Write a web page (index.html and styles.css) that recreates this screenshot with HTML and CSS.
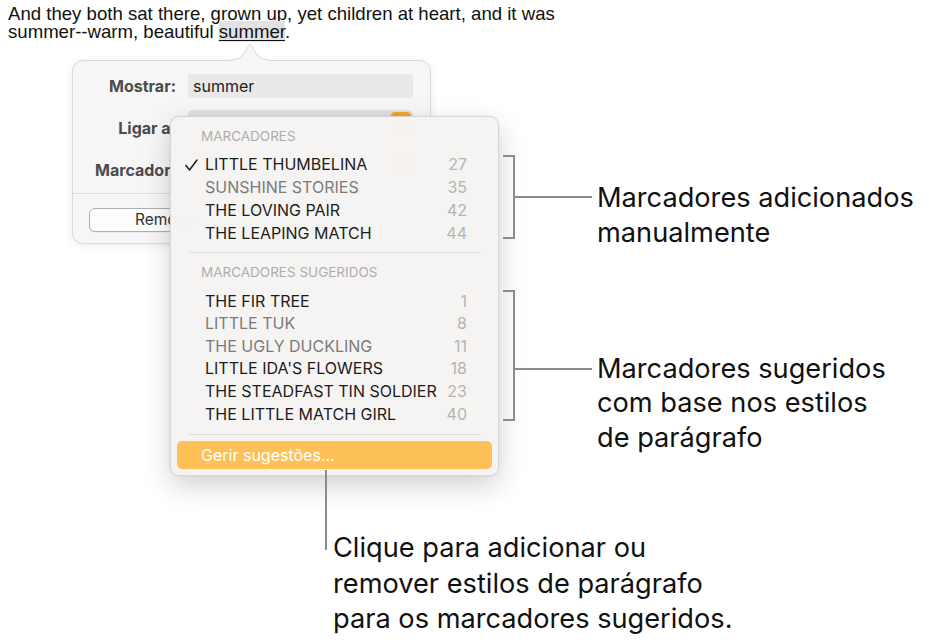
FILE: index.html
```html
<!DOCTYPE html>
<html lang="pt">
<head>
<meta charset="utf-8">
<title>Marcadores</title>
<link rel="stylesheet" href="styles.css">
</head>
<body>
<div class="canvas">
  <p class="doc">And they both sat there, grown up, yet children at heart, and it was<br>summer--warm, beautiful <span class="sel">summer</span>.</p>

  <div class="popover">
    <svg class="arrow" width="38" height="19" viewBox="0 0 38 19"><path d="M0 17 L0 19 L38 19 L38 17 C29 17 26 12 23 7 C21 3 20 1.5 19 1.5 C18 1.5 17 3 15 7 C12 12 9 17 0 17 Z" fill="#f6f6f6"/><path d="M0 17 C9 17 12 12 15 7 C17 3 18 1.5 19 1.5 C20 1.5 21 3 23 7 C26 12 29 17 38 17" fill="none" stroke="#d6d6d6" stroke-width="1"/></svg>
    <div class="form">
      <div class="label">Mostrar:</div>
      <div class="field text">summer</div>
      <div class="label low">Ligar a:</div>
      <div class="field popup"><span class="stepper"></span></div>
      <div class="label low">Marcador:</div>
      <div class="field popup"><span class="stepper"></span></div>
    </div>
    <div class="pop-sep"></div>
    <div class="buttons">
      <div class="btn">Remover</div>
      <div class="btn"></div>
    </div>
  </div>

  <div class="menu">
    <div class="menu-head">MARCADORES</div>
    <div class="group">
      <div class="item dark"><svg class="check" width="13" height="12" viewBox="0 0 13 12"><path d="M1 6.5 L4.5 11 L12 1" fill="none" stroke="#1d1d1d" stroke-width="1.5" stroke-linecap="round" stroke-linejoin="round"/></svg><span class="name">LITTLE THUMBELINA</span><span class="num">27</span></div>
      <div class="item gray"><span class="name">SUNSHINE STORIES</span><span class="num">35</span></div>
      <div class="item dark"><span class="name">THE LOVING PAIR</span><span class="num">42</span></div>
      <div class="item dark"><span class="name">THE LEAPING MATCH</span><span class="num">44</span></div>
    </div>
    <div class="menu-sep first"></div>
    <div class="menu-head second">MARCADORES SUGERIDOS</div>
    <div class="group sugg">
      <div class="item dark"><span class="name">THE FIR TREE</span><span class="num">1</span></div>
      <div class="item gray"><span class="name">LITTLE TUK</span><span class="num">8</span></div>
      <div class="item gray"><span class="name">THE UGLY DUCKLING</span><span class="num">11</span></div>
      <div class="item dark"><span class="name">LITTLE IDA'S FLOWERS</span><span class="num">18</span></div>
      <div class="item dark"><span class="name">THE STEADFAST TIN SOLDIER</span><span class="num">23</span></div>
      <div class="item dark"><span class="name">THE LITTLE MATCH GIRL</span><span class="num">40</span></div>
    </div>
    <div class="menu-sep last"></div>
    <div class="manage">Gerir sugestões...</div>
  </div>

  <div class="bracket b1"></div>
  <div class="hline h1"></div>
  <div class="callout c1">Marcadores adicionados<br>manualmente</div>

  <div class="bracket b2"></div>
  <div class="hline h2"></div>
  <div class="callout c2">Marcadores sugeridos<br>com base nos estilos<br>de parágrafo</div>

  <div class="vline"></div>
  <div class="callout c3">Clique para adicionar ou<br>remover estilos de parágrafo<br>para os marcadores sugeridos.</div>
</div>
</body>
</html>
```
FILE: styles.css
```css
html, body {
  margin: 0;
  padding: 0;
  background: #ffffff;
}
.canvas {
  position: relative;
  width: 929px;
  height: 643px;
  overflow: hidden;
  background: #ffffff;
}
.doc {
  margin: 0;
  padding: 5px 8px 0;
  font-family: "Liberation Sans", Arial, sans-serif;
  font-size: 18.6px;
  line-height: 18px;
  color: #111111;
  white-space: nowrap;
}
.sel {
  background: #e2e2e2;
  text-decoration: underline;
  text-underline-offset: 2px;
  text-decoration-thickness: 1px;
}

/* popover */
.popover {
  position: absolute;
  left: 72px;
  top: 60px;
  width: 357px;
  height: 182px;
  background: #f6f6f6;
  border: 1px solid #d9d9d9;
  border-radius: 11px;
  box-shadow: 0 2px 8px rgba(0,0,0,0.08);
  font-family: Inter, "Noto Sans", sans-serif;
}
.arrow {
  position: absolute;
  left: 158px;
  top: -18px;
  display: block;
}
.form {
  display: grid;
  grid-template-columns: 103px 225px;
  column-gap: 12px;
  row-gap: 12px;
  padding: 13px 0 0 0;
  align-items: start;
}
.label {
  text-align: right;
  font-weight: 700;
  font-size: 16px;
  color: #4b4b4b;
  line-height: 24px;
}
.label.low {
  padding-top: 6px;
}
.field {
  position: relative;
  height: 24px;
  background: #e9e9e9;
  font-size: 16px;
  line-height: 24px;
  color: #222222;
  padding-left: 5px;
  box-sizing: border-box;
}
.field.popup {
  height: 26px;
  background: #e0e0e0;
  border-radius: 5px;
}
.stepper {
  position: absolute;
  right: 2px;
  top: 2px;
  width: 20px;
  height: 22px;
  border-radius: 4px;
  background: #f5a623;
}
.pop-sep {
  margin-top: 11px;
  height: 1px;
  background: #dcdcdc;
}
.buttons {
  display: flex;
  gap: 12px;
  padding: 14px 16px 0;
}
.btn {
  width: 155px;
  height: 22px;
  border: 1px solid #aeaeae;
  border-radius: 6px;
  background: #fdfdfd;
  box-shadow: 0 1px 1px rgba(0,0,0,0.05);
  text-align: center;
  font-size: 15.5px;
  line-height: 22px;
  color: #333333;
}

/* menu */
.menu {
  position: absolute;
  left: 170px;
  top: 116px;
  width: 327px;
  height: 358px;
  padding: 0;
  background: rgba(246, 244, 242, 0.98);
  border: 1px solid #d6d6d6;
  border-radius: 9px;
  box-shadow: 0 10px 28px rgba(0,0,0,0.18), 0 0 2px rgba(0,0,0,0.1);
  font-family: Inter, "Noto Sans", sans-serif;
}
.menu-head {
  padding-left: 30px;
  margin-top: 8px;
  font-size: 13.5px;
  line-height: 22px;
  color: #adadad;
}
.menu-head.second {
  margin-top: 8px;
}
.group {
  margin-top: 5.5px;
}
.group.sugg {
  margin-top: 6.7px;
}
.item {
  position: relative;
  display: flex;
  justify-content: space-between;
  padding: 0 31px 0 34px;
  height: 23px;
  line-height: 23px;
  font-size: 16px;
}
.sugg .item {
  height: 22.6px;
  line-height: 22.6px;
}
.item.dark .name { color: #1c1c1c; }
.item.gray .name { color: #7b7b7b; }
.num { color: #b4b4b4; }
.check {
  position: absolute;
  left: 14px;
  top: 6px;
}
.menu-sep {
  margin: 7.5px 17px 0 18px;
  height: 1px;
  background: #dedcda;
}
.menu-sep.last {
  margin-top: 8.7px;
}
.manage {
  margin: 6px 6px 0;
  height: 28px;
  line-height: 28px;
  padding-left: 24px;
  border-radius: 5px;
  background: #fec158;
  color: #ffffff;
  font-size: 16px;
}

/* callouts */
.bracket {
  position: absolute;
  left: 503px;
  width: 10px;
  border: 2px solid #8c8c8c;
  border-left: none;
}
.b1 { top: 155px; height: 80px; }
.b2 { top: 290px; height: 127px; }
.hline {
  position: absolute;
  left: 515px;
  width: 77px;
  height: 2px;
  background: #8c8c8c;
}
.h1 { top: 196px; }
.h2 { top: 368px; }
.vline {
  position: absolute;
  left: 325px;
  top: 470px;
  width: 2px;
  height: 80px;
  background: #8c8c8c;
}
.callout {
  position: absolute;
  font-family: Inter, "Noto Sans", sans-serif;
  font-size: 27.2px;
  color: #111111;
  white-space: nowrap;
}
.c1 { left: 597px; top: 179.5px; line-height: 35px; }
.c2 { left: 597px; top: 351.5px; line-height: 34.5px; }
.c3 { left: 333px; top: 530px; line-height: 35.5px; }
```
